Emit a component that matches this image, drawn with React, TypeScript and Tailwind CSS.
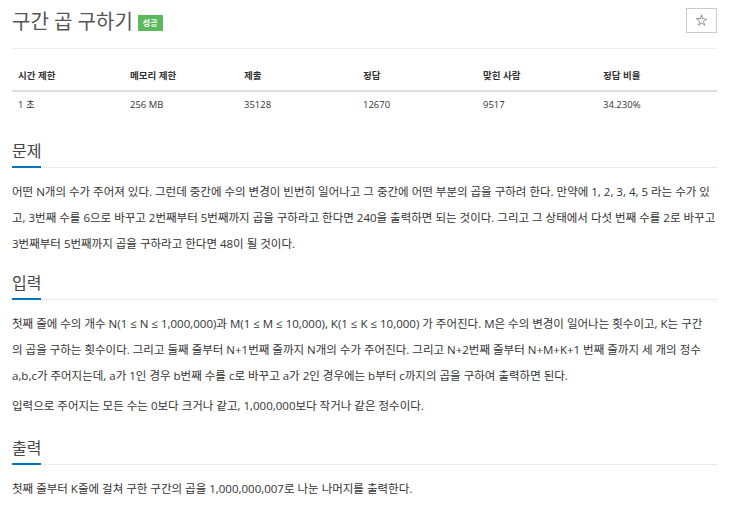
import React from 'react';

const font = { fontFamily: '"Open Sans", "Noto Sans CJK KR", sans-serif' };

const stats = [
  { label: '시간 제한', value: '1 초', w: 'w-[112px]' },
  { label: '메모리 제한', value: '256 MB', w: 'w-[114px]' },
  { label: '제출', value: '35128', w: 'w-[119px]' },
  { label: '정답', value: '12670', w: 'w-[120px]' },
  { label: '맞힌 사람', value: '9517', w: 'w-[120px]' },
  { label: '정답 비율', value: '34.230%', w: 'w-[120px]' },
];

function Headline({ title }: { title: string }) {
  return (
    <div className="border-b border-dotted border-[#d6dbe2] mb-[11px]">
      <h2 className="inline-block text-[16px] leading-[24px] text-[#444] border-b-2 border-[#0076c0] pb-[3px] -mb-[1px]">
        {title}
      </h2>
    </div>
  );
}

export default function App() {
  return (
    <div className="w-[731px] h-[512px] bg-white overflow-hidden pl-[12px] pr-[14px] text-[#333]" style={font}>
      {/* Title */}
      <div className="flex items-start justify-between border-b border-[#eee] h-[49px] pt-[8px]">
        <div className="flex items-center gap-[5px] pt-[1px]">
          <h1 className="text-[20px] leading-[26px] text-[#555]">구간 곱 구하기</h1>
          <span className="bg-[#5cb85c] text-white text-[8px] font-bold leading-[16px] h-[16px] px-[5px] mt-[2px]">성공</span>
        </div>
        <button className="w-[31px] h-[25px] border border-[#ccc] flex items-center justify-center text-[12px] text-[#333]">☆</button>
      </div>

      {/* Stats table */}
      <div className="mt-[13px] mb-[20px]">
        <div className="flex border-b-2 border-[#ddd] h-[30px] items-center">
          {stats.map(s => (
            <div key={s.label} className={`${s.w} px-[6px] text-[9.5px] font-bold text-[#333]`}>{s.label}</div>
          ))}
        </div>
        <div className="flex h-[27px] items-center">
          {stats.map(s => (
            <div key={s.label} className={`${s.w} px-[6px] text-[9.5px] text-[#333]`}>{s.value}</div>
          ))}
        </div>
      </div>

      {/* 문제 */}
      <Headline title="문제" />
      <p className="text-[11.5px] leading-[26px] mb-[14px]">
        어떤 N개의 수가 주어져 있다. 그런데 중간에 수의 변경이 빈번히 일어나고 그 중간에 어떤 부분의 곱을 구하려 한다. 만약에 1, 2, 3, 4, 5 라는 수가 있고, 3번째 수를 6으로 바꾸고 2번째부터 5번째까지 곱을 구하라고 한다면 240을 출력하면 되는 것이다. 그리고 그 상태에서 다섯 번째 수를 2로 바꾸고 3번째부터 5번째까지 곱을 구하라고 한다면 48이 될 것이다.
      </p>

      {/* 입력 */}
      <Headline title="입력" />
      <p className="text-[11.5px] leading-[26px] mb-[4px]">
        첫째 줄에 수의 개수 N(1 ≤ N ≤ 1,000,000)과 M(1 ≤ M ≤ 10,000), K(1 ≤ K ≤ 10,000) 가 주어진다. M은 수의 변경이 일어나는 횟수이고, K는 구간
        <br />
        의 곱을 구하는 횟수이다. 그리고 둘째 줄부터 N+1번째 줄까지 N개의 수가 주어진다. 그리고 N+2번째 줄부터 N+M+K+1 번째 줄까지 세 개의 정수
        <br />
        a,b,c가 주어지는데, a가 1인 경우 b번째 수를 c로 바꾸고 a가 2인 경우에는 b부터 c까지의 곱을 구하여 출력하면 된다.
      </p>
      <p className="text-[11.5px] leading-[26px] mb-[17px]">
        입력으로 주어지는 모든 수는 0보다 크거나 같고, 1,000,000보다 작거나 같은 정수이다.
      </p>

      {/* 출력 */}
      <Headline title="출력" />
      <p className="text-[11.5px] leading-[26px]">
        첫째 줄부터 K줄에 걸쳐 구한 구간의 곱을 1,000,000,007로 나눈 나머지를 출력한다.
      </p>
    </div>
  );
}
